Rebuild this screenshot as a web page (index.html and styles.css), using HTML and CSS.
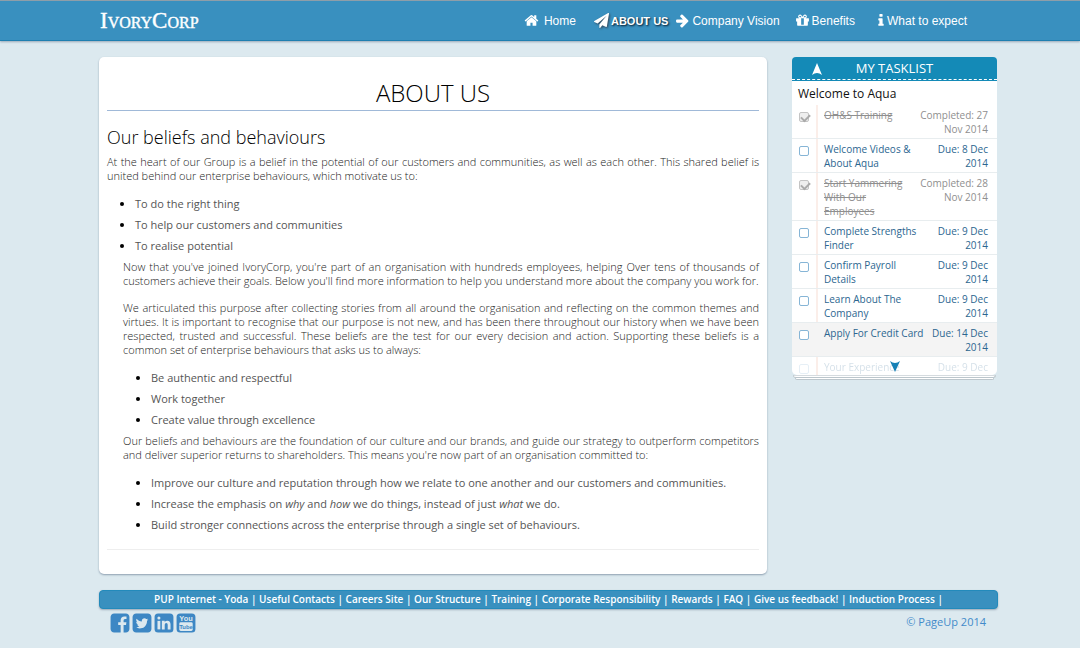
FILE: index.html
```html
<!DOCTYPE html>
<html lang="en">
<head>
<meta charset="utf-8">
<meta name="viewport" content="width=device-width, initial-scale=1">
<title>About Us - IvoryCorp</title>
<link rel="stylesheet" href="styles.css">
</head>
<body>
<header class="topbar">
  <a class="logo" href="#">IvoryCorp</a>
  <nav class="nav" aria-label="Main">
    <a class="nav-link nav-home" href="#"><svg class="icon" viewBox="0 0 1792 1792" aria-hidden="true"><path d="M1472 992v480q0 26-19 45t-45 19h-384v-384h-256v384h-384q-26 0-45-19t-19-45v-480q0-1 .5-3t.5-3l575-474 575 474q1 2 1 6zm223-69l-62 74q-8 9-21 11h-3q-13 0-21-7l-692-577-692 577q-12 8-24 7-13-2-21-11l-62-74q-8-10-7-23.5t11-21.5l719-599q32-26 76-26t76 26l244 204v-195q0-14 9-23t23-9h192q14 0 23 9t9 23v408l219 182q10 8 11 21.5t-7 23.5z"/></svg>Home</a>
    <a class="nav-link nav-current" href="#" aria-current="page"><svg class="icon" viewBox="0 0 1792 1792" aria-hidden="true"><path d="M1764 11q33 24 27 64l-256 1536q-5 29-32 45-14 8-31 8-11 0-24-5l-453-185-242 295q-18 23-49 23-13 0-22-4-19-7-30.5-23.5t-11.5-36.5v-349l864-1059-1069 925-395-162q-37-14-40-55-2-40 32-59l1664-960q15-9 32-9 20 0 36 11z"/></svg>ABOUT US</a>
    <a class="nav-link nav-vision" href="#"><svg class="icon" viewBox="0 0 1792 1792" aria-hidden="true"><path d="M1600 960q0 54-37 91l-651 651q-39 37-91 37-51 0-90-37l-75-75q-38-38-38-91t38-91l293-293h-704q-52 0-84.5-37.5t-32.5-90.5v-128q0-53 32.5-90.5t84.5-37.5h704l-293-294q-38-36-38-90t38-90l75-75q38-38 90-38 53 0 91 38l651 651q37 35 37 90z"/></svg>Company Vision</a>
    <a class="nav-link nav-benefits" href="#"><svg class="icon" viewBox="0 0 1792 1792" aria-hidden="true"><path d="M1056 1356v-716h-320v716q0 25 18 38.5t46 13.5h192q28 0 46-13.5t18-38.5zm-456-844h195l-126-161q-26-31-69-31-40 0-68 28t-28 68 28 68 68 28zm688-96q0-40-28-68t-68-28q-43 0-69 31l-125 161h194q40 0 68-28t28-68zm376 256v320q0 14-9 23t-23 9h-96v416q0 40-28 68t-68 28h-1088q-40 0-68-28t-28-68v-416h-96q-14 0-23-9t-9-23v-320q0-14 9-23t23-9h440q-93 0-158.5-65.5t-65.5-158.5 65.5-158.5 158.5-65.5q107 0 168 77l128 165 128-165q61-77 168-77 93 0 158.5 65.5t65.5 158.5-65.5 158.5-158.5 65.5h440q14 0 23 9t9 23z"/></svg>Benefits</a>
    <a class="nav-link nav-expect" href="#"><svg class="icon icon-narrow" viewBox="448 0 896 1792" aria-hidden="true"><path d="M1216 1344v128q0 26-19 45t-45 19h-512q-26 0-45-19t-19-45v-128q0-26 19-45t45-19h64v-384h-64q-26 0-45-19t-19-45v-128q0-26 19-45t45-19h384q26 0 45 19t19 45v576h64q26 0 45 19t19 45zm-128-1152v192q0 26-19 45t-45 19h-256q-26 0-45-19t-19-45v-192q0-26 19-45t45-19h256q26 0 45 19t19 45z"/></svg>What to expect</a>
  </nav>
</header>

<div class="page">
  <main class="card">
    <h1 class="title">ABOUT US</h1>
    <h2 class="subtitle">Our beliefs and behaviours</h2>
    <p class="text">At the heart of our Group is a belief in the potential of our customers and communities, as well as each other. This shared belief is united behind our enterprise behaviours, which motivate us to:</p>
    <ul class="points">
      <li>To do the right thing</li>
      <li>To help our customers and communities</li>
      <li>To realise potential</li>
    </ul>
    <div class="inset">
      <p class="text">Now that you've joined IvoryCorp, you're part of an organisation with hundreds employees, helping Over tens of thousands of customers achieve their goals. Below you'll find more information to help you understand more about the company you work for.</p>
      <p class="text">We articulated this purpose after collecting stories from all around the organisation and reflecting on the common themes and virtues. It is important to recognise that our purpose is not new, and has been there throughout our history when we have been respected, trusted and successful. These beliefs are the test for our every decision and action. Supporting these beliefs is a common set of enterprise behaviours that asks us to always:</p>
      <ul class="points">
        <li>Be authentic and respectful</li>
        <li>Work together</li>
        <li>Create value through excellence</li>
      </ul>
      <p class="text">Our beliefs and behaviours are the foundation of our culture and our brands, and guide our strategy to outperform competitors and deliver superior returns to shareholders. This means you're now part of an organisation committed to:</p>
      <ul class="points">
        <li>Improve our culture and reputation through how we relate to one another and our customers and communities.</li>
        <li>Increase the emphasis on <em>why</em> and <em>how</em> we do things, instead of just <em>what</em> we do.</li>
        <li>Build stronger connections across the enterprise through a single set of behaviours.</li>
      </ul>
    </div>
    <hr class="rule">
  </main>

  <aside class="tasks" aria-labelledby="tasks-title">
    <div class="tasks-head">
      <button class="arrow-up" type="button" aria-label="Scroll up"><svg class="arrow" viewBox="0 0 12 12" aria-hidden="true"><path d="M6 0L11 12Q6 8 1 12Z"/></svg></button>
      <h2 class="tasks-title" id="tasks-title">MY TASKLIST</h2>
    </div>
    <div class="tasks-body">
      <h3 class="tasks-group">Welcome to Aqua</h3>
      <div class="tasks-list">
        <div class="task task-done"><input class="check" type="checkbox" id="t1" checked disabled><label class="task-name" for="t1">OH&amp;S Training</label><span class="task-due">Completed: 27 Nov 2014</span></div>
        <div class="task"><input class="check" type="checkbox" id="t2"><label class="task-name" for="t2">Welcome Videos &amp; About Aqua</label><span class="task-due">Due: 8 Dec 2014</span></div>
        <div class="task task-done"><input class="check" type="checkbox" id="t3" checked disabled><label class="task-name" for="t3">Start Yammering With Our Employees</label><span class="task-due">Completed: 28 Nov 2014</span></div>
        <div class="task"><input class="check" type="checkbox" id="t4"><label class="task-name" for="t4">Complete Strengths Finder</label><span class="task-due">Due: 9 Dec 2014</span></div>
        <div class="task"><input class="check" type="checkbox" id="t5"><label class="task-name" for="t5">Confirm Payroll Details</label><span class="task-due">Due: 9 Dec 2014</span></div>
        <div class="task"><input class="check" type="checkbox" id="t6"><label class="task-name" for="t6">Learn About The Company</label><span class="task-due">Due: 9 Dec 2014</span></div>
        <div class="task task-active"><input class="check" type="checkbox" id="t7"><label class="task-name" for="t7">Apply For Credit Card</label><span class="task-due">Due: 14 Dec 2014</span></div>
        <div class="task task-next"><input class="check" type="checkbox" id="t8"><label class="task-name" for="t8">Your Experience</label><span class="task-due">Due: 9 Dec</span></div>
      </div>
      <button class="arrow-down" type="button" aria-label="Scroll down"><svg class="arrow" viewBox="0 0 12 12" aria-hidden="true"><path d="M6 12L11 1Q6 5 1 1Z"/></svg></button>
    </div>
    <div class="sheet"></div>
    <div class="sheet sheet-last"></div>
  </aside>
</div>

<footer class="footer">
  <nav class="footer-bar" aria-label="Footer">
    <a href="#">PUP Internet - Yoda</a> | <a href="#">Useful Contacts</a> | <a href="#">Careers Site</a> | <a href="#">Our Structure</a> | <a href="#">Training</a> | <a href="#">Corporate Responsibility</a> | <a href="#">Rewards</a> | <a href="#">FAQ</a> | <a href="#">Give us feedback!</a> | <a href="#">Induction Process</a> |
  </nav>
  <div class="footer-row">
    <div class="social">
      <a href="#" aria-label="Facebook"><svg class="social-icon" viewBox="0 0 1792 1792"><path d="M1376 128q119 0 203.5 84.5t84.5 203.5v960q0 119-84.5 203.5t-203.5 84.5h-188v-595h199l30-232h-229v-148q0-56 23.5-84t91.5-28l122-1v-207q-63-9-178-9-136 0-217.5 80t-81.5 226v171h-200v232h200v595h-532q-119 0-203.5-84.5t-84.5-203.5v-960q0-119 84.5-203.5t203.5-84.5h960z"/></svg></a>
      <a href="#" aria-label="Twitter"><svg class="social-icon" viewBox="0 0 1792 1792"><path d="M1408 610q-56 25-121 34 68-40 93-117-65 38-134 51-61-66-153-66-87 0-148.5 61.5t-61.5 148.5q0 29 5 48-129-7-242-65t-192-155q-29 50-29 106 0 114 91 175-47-1-100-26v2q0 75 50 133.5t123 72.5q-29 8-51 8-13 0-39-4 21 63 74.5 104t121.5 42q-116 90-261 90-26 0-50-3 148 94 322 94 112 0 210-35.5t168-95 120.5-137 75-162 24.5-168.5q0-18-1-27 63-45 105-109zm256-194v960q0 119-84.5 203.5t-203.5 84.5h-960q-119 0-203.5-84.5t-84.5-203.5v-960q0-119 84.5-203.5t203.5-84.5h960q119 0 203.5 84.5t84.5 203.5z"/></svg></a>
      <a href="#" aria-label="LinkedIn"><svg class="social-icon" viewBox="0 0 1792 1792"><rect x="128" y="128" width="1536" height="1536" rx="288"/><g class="cut"><circle cx="481" cy="494" r="125"/><rect x="365" y="722" width="231" height="694"/><path d="M723 722h231v98q70-114 214-114 260 0 260 312v398h-231v-371q0-155-116-155-127 0-127 155v371H723z"/></g></svg></a>
      <a href="#" aria-label="YouTube"><svg class="social-icon" viewBox="0 0 1792 1792"><rect x="128" y="128" width="1536" height="1536" rx="288"/><rect class="cut" x="350" y="840" width="1092" height="700" rx="120"/><text class="yt cut" x="896" y="740" font-size="600" text-anchor="middle">You</text><text class="yt" x="896" y="1380" font-size="480" text-anchor="middle">Tube</text></svg></a>
    </div>
    <a class="copyright" href="#">© PageUp 2014</a>
  </div>
</footer>
</body>
</html>
```
FILE: styles.css
```css
* { box-sizing: border-box; }
body {
  margin: 0;
  background: #dce9ef;
  color: #222;
  font-family: "Open Sans", sans-serif;
  font-size: 12px;
}
a { color: inherit; text-decoration: none; }
button { border: 0; padding: 0; background: none; cursor: pointer; }
h1, h2, h3, p, ul { margin: 0; font-weight: 400; }

.topbar {
  display: flex;
  justify-content: space-between;
  align-items: center;
  height: 41px;
  padding: 0 113px 0 100px;
  background: #3990bf;
  border-top: 1px solid #8e9ea9;
  border-bottom: 1px solid #1f7fb0;
  box-shadow: 0 1px 2px #9aa9b8;
  color: #fff;
}
.logo {
  font-family: "Liberation Serif", serif;
  font-size: 23px;
  font-variant: small-caps;
  line-height: 24px;
  -webkit-text-stroke: 0.4px #fff;
}
.nav {
  display: flex;
  font-family: "Liberation Sans", Arial, sans-serif;
  font-size: 12px;
  line-height: 16px;
}
.nav-link { display: flex; align-items: center; gap: 2px; }
.icon { width: 15px; height: 15px; fill: #fff; }
.icon-narrow { width: 8px; }
.nav-home { margin-right: 18px; gap: 5px; }
.nav-current { margin-right: 7px; font-size: 11px; font-weight: 700; text-shadow: 1px 1px 2px #012; }
.nav-current .icon { filter: drop-shadow(1px 1px 1px #345); }
.nav-vision { margin-right: 15px; }
.nav-benefits { margin-right: 22px; }

.page {
  display: grid;
  grid-template-columns: minmax(0, 1fr) 205px;
  gap: 25px;
  align-items: start;
  padding: 16px 83px 0 99px;
}
.card {
  padding: 20px 8px 24px;
  background: #fff;
  border-radius: 5px;
  box-shadow: 0 1px 2px #8d9fb0;
}
.title {
  padding-bottom: 1px;
  border-bottom: 1px solid #a0b9d8;
  color: #000;
  font-size: 24px;
  font-weight: 300;
  line-height: 32px;
  text-align: center;
}
.subtitle {
  margin: 14px 0 6px;
  color: #000;
  font-size: 18px;
  font-weight: 300;
  line-height: 24px;
}
.text { font-size: 11px; font-weight: 300; line-height: 14px; text-align: justify; }
.text + .text { margin-top: 13px; }
.points { padding: 10px 0 4px 28px; color: #555; font-size: 11px; line-height: 21px; }
.points li::marker { color: #000; font-size: 12px; }
.inset { padding-left: 16px; }
.rule { margin: 10px 0 0; border: 0; border-top: 1px solid #eee; }

.tasks-head {
  position: relative;
  height: 24px;
  background: #148ab7;
  border-radius: 4px 4px 0 0;
  color: #fff;
  border-bottom: 1px solid #148ab7;
}
.tasks-head::after {
  content: "";
  position: absolute;
  inset: auto 0 0;
  border-bottom: 1px dashed #fff;
}
.tasks-title { font-size: 13px; line-height: 23px; text-align: center; }
.arrow { display: block; width: 12px; height: 12px; fill: currentColor; }
.arrow-up { position: absolute; left: 19px; top: 6px; color: #fff; }
.arrow-down { position: absolute; left: 97px; bottom: 3px; color: #1680b5; }
.tasks-body { position: relative; background: #fff; border-radius: 0 0 5px 5px; }
.tasks-group { padding: 3px 6px 1px; color: #111; font-size: 12px; line-height: 20px; }
.tasks-list { height: 270px; overflow: hidden; }
.task {
  display: grid;
  grid-template-columns: 24px minmax(0, 1fr) 70px;
  padding: 3px 9px 2px 0;
  background: linear-gradient(#fbeee9, #fbeee9) 24px 0 / 2px 100% no-repeat;
  border-bottom: 1px solid #e8edef;
  color: #2c6690;
  font-size: 10px;
  line-height: 14px;
}
.check {
  appearance: none;
  width: 10px;
  height: 10px;
  margin: 4px 0 0 7px;
  border: 1px solid #86b5d6;
  border-radius: 2px;
  background: #fff;
}
.check:checked { border-color: #c4c4c4; background: #eee; }
.check:checked::after {
  content: "";
  display: block;
  width: 7px;
  height: 4px;
  margin: 1px;
  border: solid #aaa;
  border-width: 0 0 2px 2px;
  transform: rotate(-45deg);
}
.task-name { padding-left: 8px; }
.task-due { text-align: right; }
.task-done { color: #8f8f8f; }
.task-done .task-name { text-decoration: line-through; }
.task-active { grid-template-columns: 24px minmax(0, 1fr) 60px; background: #f4f4f4; }
.task-next > * { opacity: 0.2; }
.sheet {
  height: 3px;
  margin: 0 1px;
  background: #fff;
  border: 1px solid #bcc6cc;
  border-top-color: #d5dbdf;
  border-radius: 0 0 4px 4px;
}
.sheet-last { height: 2px; margin: 0 3px; border-top: 0; }

.footer { padding: 16px 82px 12px 99px; }
.footer-bar {
  padding: 0 12px;
  background: #3990bf;
  border: 1px solid #238abb;
  border-radius: 4px;
  box-shadow: 0 1px 2px #9aa9b8;
  color: #fff;
  font-size: 10px;
  font-weight: 600;
  line-height: 17px;
  text-align: center;
}
.footer-row {
  display: flex;
  justify-content: space-between;
  padding: 3px 12px 0 10px;
}
.social { display: flex; }
.social-icon { display: block; width: 22px; height: 22px; fill: #3d87c4; }
.social-icon .cut { fill: #dce9ef; }
.yt { font-family: "Liberation Sans", Arial, sans-serif; font-weight: 700; }
.copyright { color: #428bca; font-size: 11px; line-height: 20px; }
```
